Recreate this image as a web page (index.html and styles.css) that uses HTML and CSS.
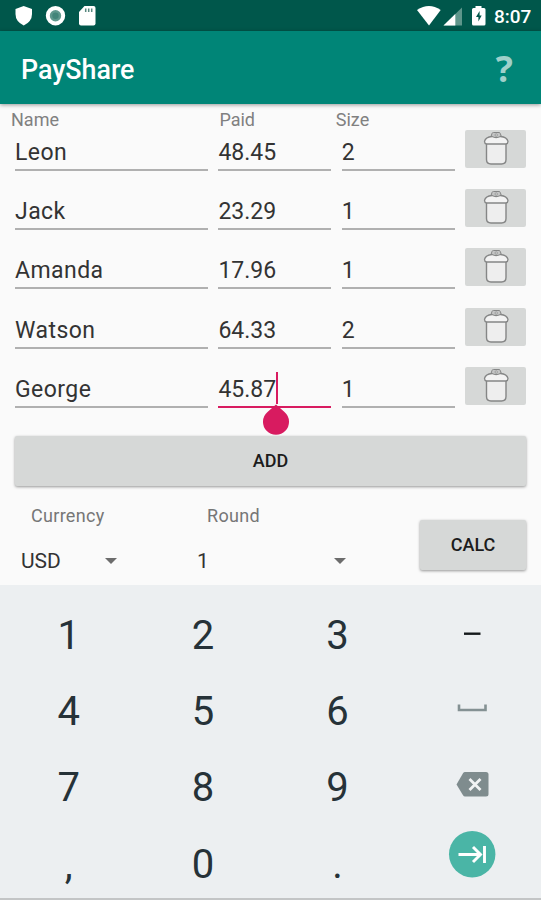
FILE: index.html
```html
<!DOCTYPE html>
<html lang="en">
  <head>
    <meta charset="UTF-8" />
    <title>PayShare</title>
    <link rel="stylesheet" href="styles.css" />
  </head>
  <body>
    <svg width="0" height="0" class="symbols">
      <symbol id="trash" viewBox="0 0 26 36">
        <path d="M8 5.500 L9 2.500 Q9.300 1.500 10.500 1.500 H16 Q17 1.500 17.300 2.500 L18.300 5.500" fill="#c4c5c5" stroke="#858686" />
        <circle cx="13.200" cy="4" r="1.200" fill="#ddd" stroke="#858686" stroke-width="0.700" />
        <path d="M3.500 13 V28.500 Q3.500 33 8 33 H18.500 Q23 33 23 28.500 V13" fill="#eeeeee" stroke="#858686" stroke-width="1.400" />
        <path d="M3.500 13 Q1.500 12.500 1.500 10.500 Q2.500 6 9 5.500 Q13 7.500 17.500 5.500 Q24 6 25 10.500 Q25 12.500 23 13 Z" fill="#f3f3f3" stroke="#858686" stroke-width="1.300" />
      </symbol>
    </svg>

    <div class="statusbar">
      <svg width="110" height="31" viewBox="0 0 110 31">
        <path d="M23.700 6 L32 9 V14 Q32 21.500 23.700 25.500 Q15.500 21.500 15.500 14 V9 Z" fill="#fff" />
        <circle cx="55.500" cy="15.700" r="7.700" fill="#5f988d" stroke="#fff" stroke-width="4" />
        <circle cx="55.500" cy="15.700" r="3.200" fill="#438579" />
        <path d="M84.500 6 H93.500 Q95.500 6 95.500 8 V23.500 Q95.500 25.500 93.500 25.500 H81 Q79 25.500 79 23.500 V12 Z" fill="#fff" />
        <path d="M85.700 8.500 V12 M88.700 8.500 V12 M91.700 8.500 V12" stroke="#58887f" stroke-width="1.500" />
      </svg>
      <div class="status-right">
        <svg width="72" height="31" viewBox="415 0 72 31">
          <path d="M417 10 Q429 2 440.700 10 L429 25.500 Z" fill="#fff" />
          <path d="M462 7.500 V25.500 H443.500 Z" fill="#5e968b" />
          <path d="M455.300 14 V25.500 H443.500 Z" fill="#fff" />
          <path d="M475.500 6 H481.500 V8 H484 Q485.500 8 485.500 9.500 V24 Q485.500 25.500 484 25.500 H473.500 Q472 25.500 472 24 V9.500 Q472 8 473.500 8 H475.500 Z" fill="#fff" />
          <path d="M479.600 11 L476 17 H478.400 V21.500 L481.700 15.600 H479.600 Z" fill="#00574b" />
        </svg>
        <span class="clock">8:07</span>
      </div>
    </div>

    <header>
      <h1>PayShare</h1>
      <span class="help">?</span>
    </header>

    <main>
      <div class="row labels">
        <span>Name</span>
        <span>Paid</span>
        <span>Size</span>
      </div>
      <div class="row">
        <span class="field name">Leon</span>
        <span class="field">48.45</span>
        <span class="field size">2</span>
        <button class="delete"><svg width="26" height="36"><use href="#trash" /></svg></button>
      </div>
      <div class="row">
        <span class="field name">Jack</span>
        <span class="field">23.29</span>
        <span class="field size">1</span>
        <button class="delete"><svg width="26" height="36"><use href="#trash" /></svg></button>
      </div>
      <div class="row">
        <span class="field name">Amanda</span>
        <span class="field">17.96</span>
        <span class="field size">1</span>
        <button class="delete"><svg width="26" height="36"><use href="#trash" /></svg></button>
      </div>
      <div class="row">
        <span class="field name">Watson</span>
        <span class="field">64.33</span>
        <span class="field size">2</span>
        <button class="delete"><svg width="26" height="36"><use href="#trash" /></svg></button>
      </div>
      <div class="row">
        <span class="field name">George</span>
        <span class="field active">45.87<i class="caret"></i>
          <svg class="handle" width="28" height="31" viewBox="0 0 28 31">
            <path d="M14 0.500 L22.500 8 A13 13 0 1 1 5.500 8 Z" fill="#d81b60" />
          </svg>
        </span>
        <span class="field size">1</span>
        <button class="delete"><svg width="26" height="36"><use href="#trash" /></svg></button>
      </div>

      <button class="add">ADD</button>

      <div class="options">
        <div class="option currency">
          <label>Currency</label>
          <div class="select">USD <i class="arrow"></i></div>
        </div>
        <div class="option round">
          <label>Round</label>
          <div class="select">1 <i class="arrow"></i></div>
        </div>
        <button class="calc">CALC</button>
      </div>
    </main>

    <section class="keyboard">
      <span>1</span>
      <span>2</span>
      <span>3</span>
      <span><svg width="50" height="76" viewBox="0 0 50 76"><path d="M17 36.700 H33.500" stroke="#15191b" stroke-width="2.400" /></svg></span>
      <span>4</span>
      <span>5</span>
      <span>6</span>
      <span><svg width="50" height="76" viewBox="0 0 50 76"><path d="M12 31.500 V37 H38.500 V31.500" fill="none" stroke="#849193" stroke-width="2.600" /></svg></span>
      <span>7</span>
      <span>8</span>
      <span>9</span>
      <span>
        <svg width="50" height="76" viewBox="0 0 50 76">
          <path d="M18 23 H39 Q41.500 23 41.500 25.500 V45 Q41.500 47.500 39 47.500 H18 Q16.800 47.500 16 46.300 L9.500 35.500 L16 24.300 Q16.800 23 18 23 Z" fill="#7f8c8e" />
          <path d="M22.500 30 L33.500 41 M33.500 30 L22.500 41" stroke="#f1f3f4" stroke-width="2.800" />
        </svg>
      </span>
      <span>,</span>
      <span>0</span>
      <span>.</span>
      <span>
        <svg width="50" height="76" viewBox="0 0 50 76">
          <circle cx="25.200" cy="28.200" r="23.200" fill="#4ab5a6" />
          <path d="M11.500 28.500 H33 M26 21 L33.500 28.500 L26 36 M37.500 20 V37" fill="none" stroke="#fff" stroke-width="2.900" />
        </svg>
      </span>
    </section>
  </body>
</html>
```
FILE: styles.css
```css
* {
  box-sizing: border-box;
}

body {
  margin: 0;
  height: 900px;
  overflow: hidden;
  display: flex;
  flex-direction: column;
  background-color: #fafafa;
  font-family: Roboto, sans-serif;
  color: #333;
}

button {
  border: none;
  padding: 0;
  border-radius: 2px;
  background-color: #d6d8d7;
  font-family: Roboto, sans-serif;
  font-size: 18px;
  font-weight: 500;
  color: #1c1c1c;
}

svg {
  display: block;
}

.symbols {
  position: absolute;
}

.statusbar {
  height: 31px;
  flex: none;
  display: flex;
  justify-content: space-between;
  background-color: #00574b;
}

.status-right {
  display: flex;
  width: 126px;
}

.clock {
  margin-left: 7px;
  line-height: 33px;
  font-size: 19px;
  font-weight: 500;
  color: #fff;
}

header {
  height: 73px;
  flex: none;
  display: flex;
  justify-content: space-between;
  align-items: center;
  padding: 0 28px 0 21px;
  background-color: #008577;
  box-shadow: 0 1px 4px rgba(0, 0, 0, 0.4);
}

h1 {
  margin: 5px 0 0;
  font-size: 26.800px;
  font-weight: 500;
  color: #fff;
}

.help {
  margin-top: 2px;
  font-family: "Open Sans", sans-serif;
  font-size: 36px;
  font-weight: 700;
  color: #9fd0ca;
}

main {
  height: 481px;
  flex: none;
}

.row {
  display: grid;
  grid-template-columns: 193px 113px 113px 61px;
  column-gap: 10.400px;
  height: 59.200px;
  padding-left: 15px;
}

.labels {
  height: 26px;
  line-height: 31px;
  font-size: 18px;
  color: #808080;
}

.labels span {
  margin-left: -4px;
}

.labels span:nth-child(2) {
  margin-left: 1px;
}

.labels span:nth-child(3) {
  margin-left: -6px;
}

.field {
  height: 41px;
  line-height: 45px;
  border-bottom: 2px solid #b0b0b0;
  font-size: 23px;
  position: relative;
}

.name {
  letter-spacing: 0.450px;
}

.active {
  border-bottom: 2.500px solid #d81b60;
}

.caret {
  position: absolute;
  left: 58px;
  top: 5px;
  width: 2px;
  height: 32px;
  background-color: #d81b60;
}

.handle {
  position: absolute;
  left: 44px;
  top: 37px;
}

.delete {
  height: 38px;
  display: flex;
  justify-content: center;
}

.delete svg {
  margin-top: 1px;
}

.add {
  display: block;
  width: 511px;
  height: 50px;
  margin: 10px 0 0 15px;
  box-shadow: 0 1px 3px rgba(0, 0, 0, 0.4);
}

.options {
  display: flex;
  padding: 17px 15px 0 21px;
}

.option {
  font-size: 18px;
}

.currency {
  width: 176px;
}

.round {
  width: 223px;
}

label {
  display: block;
  margin-left: 10px;
  line-height: 26px;
  letter-spacing: 0.300px;
  color: #767676;
}

.select {
  display: flex;
  justify-content: space-between;
  align-items: center;
  margin-top: 16px;
  line-height: 32px;
  font-size: 21px;
}

.currency .select {
  width: 96px;
}

.round .select {
  width: 149px;
}

.arrow {
  border: 6px solid transparent;
  border-top-color: #6c6c6c;
  border-bottom: none;
}

.calc {
  width: 106px;
  height: 50px;
  margin-top: 17px;
  box-shadow: 0 1px 3px rgba(0, 0, 0, 0.4);
}

.keyboard {
  flex: 1;
  min-height: 0;
  display: grid;
  grid-template-columns: repeat(4, 134.400px);
  grid-template-rows: repeat(4, 76.200px);
  padding: 12px 0 0 1.500px;
  border-bottom: 2px solid #c3c5c6;
  background-color: #eceff1;
  font-size: 40px;
  line-height: 77px;
  text-align: center;
  color: #263238;
}

.keyboard span {
  height: 76px;
}

/* the last row hangs over the bottom edge */
.keyboard span:nth-child(n + 13) {
  height: 60px;
}

.keyboard svg {
  margin: 0 auto;
}
```
